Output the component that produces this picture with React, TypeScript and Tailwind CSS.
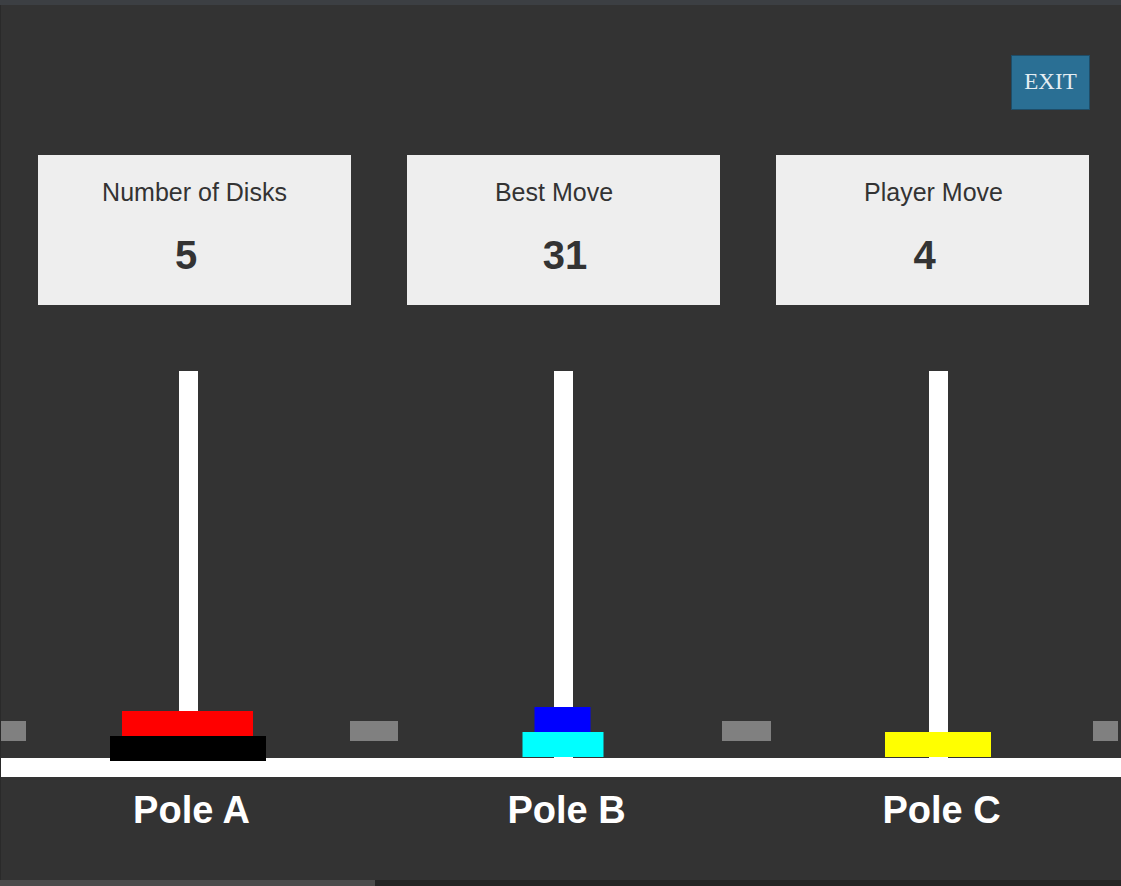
const font = { fontFamily: '"Liberation Sans", Arial, sans-serif' }

type Disk = { w: string; color: string }

const poles: { label: string; disks: Disk[]; low?: boolean }[] = [
    {
        label: 'Pole A',
        low: true,
        disks: [
            { w: 'w-[131px]', color: 'bg-[#ff0000]' },
            { w: 'w-[156px]', color: 'bg-black' },
        ],
    },
    {
        label: 'Pole B',
        disks: [
            { w: 'w-[56px]', color: 'bg-[#0000ff]' },
            { w: 'w-[81px]', color: 'bg-[#00ffff]' },
        ],
    },
    {
        label: 'Pole C',
        disks: [{ w: 'w-[106px]', color: 'bg-[#ffff00]' }],
    },
]

function StatCard({ title, value, titleCls, valueCls }: { title: string; value: string; titleCls: string; valueCls: string }) {
    return (
        <div className="flex h-[150px] w-[313px] flex-col items-center bg-[#eeeeee] pt-[25px] text-[#333333]">
            <h3 className={`text-[25px] leading-none font-normal ${titleCls}`}>{title}</h3>
            <p className={`mt-[30px] text-[40px] leading-none font-bold ${valueCls}`}>{value}</p>
        </div>
    )
}

export default function App() {
    return (
        <div className="h-[886px] w-[1121px] overflow-hidden bg-[#333333]" style={font}>
            <div className="h-[5px] bg-[#3c3f43]" />
            <main className="flex h-[875px] flex-col overflow-hidden border-l border-[#2a2a2a]">
                <header className="flex justify-end pt-[50px] pr-[31px]">
                    <button
                        className="flex h-[55px] w-[79px] items-center justify-center border border-[#1e4d68] bg-[#2a6f94] text-[23px] text-[#e4edf2]"
                        style={{ fontFamily: '"Liberation Serif", "Times New Roman", serif' }}
                    >
                        EXIT
                    </button>
                </header>

                <section className="mt-[45px] flex gap-[56px] pl-[37px]">
                    <StatCard title="Number of Disks" value="5" titleCls="" valueCls="pr-[17px]" />
                    <StatCard title="Best Move" value="31" titleCls="pr-[19px]" valueCls="pl-[3px]" />
                    <StatCard title="Player Move" value="4" titleCls="pl-[2px]" valueCls="pr-[16px]" />
                </section>

                <section className="relative mt-[66px] w-[1125px]">
                    <div className="flex">
                        {poles.map((p) => (
                            <div key={p.label} className="relative flex h-[387px] w-[375px] justify-center">
                                <div className="h-full w-[19px] bg-white" />
                                <div
                                    className={`absolute left-1/2 z-10 -ml-px flex -translate-x-1/2 flex-col items-center ${p.low ? '-bottom-[3px]' : 'bottom-[1px]'}`}
                                >
                                    {p.disks.map((d, i) => (
                                        <div key={i} className={`h-[25px] ${d.w} ${d.color}`} />
                                    ))}
                                </div>
                            </div>
                        ))}
                    </div>
                    <div className="h-[19px] w-[1120px] bg-white" />

                    {/* gray markers */}
                    <div className="absolute top-[350px] left-0 h-[20px] w-[25px] bg-[#808080]" />
                    <div className="absolute top-[350px] left-[349px] h-[20px] w-[48px] bg-[#808080]" />
                    <div className="absolute top-[350px] left-[721px] h-[20px] w-[49px] bg-[#808080]" />
                    <div className="absolute top-[350px] left-[1092px] h-[20px] w-[25px] bg-[#808080]" />
                </section>

                <footer className="mt-[14px] flex w-[1125px]">
                    {poles.map((p) => (
                        <div key={p.label} className="flex w-[375px] justify-center pl-[6px]">
                            <span className="text-[38px] leading-none font-bold text-white">{p.label}</span>
                        </div>
                    ))}
                </footer>
            </main>
            <div className="flex h-[6px] bg-[#242424]">
                <div className="w-[375px] bg-[#4b4b4b]" />
            </div>
        </div>
    )
}
